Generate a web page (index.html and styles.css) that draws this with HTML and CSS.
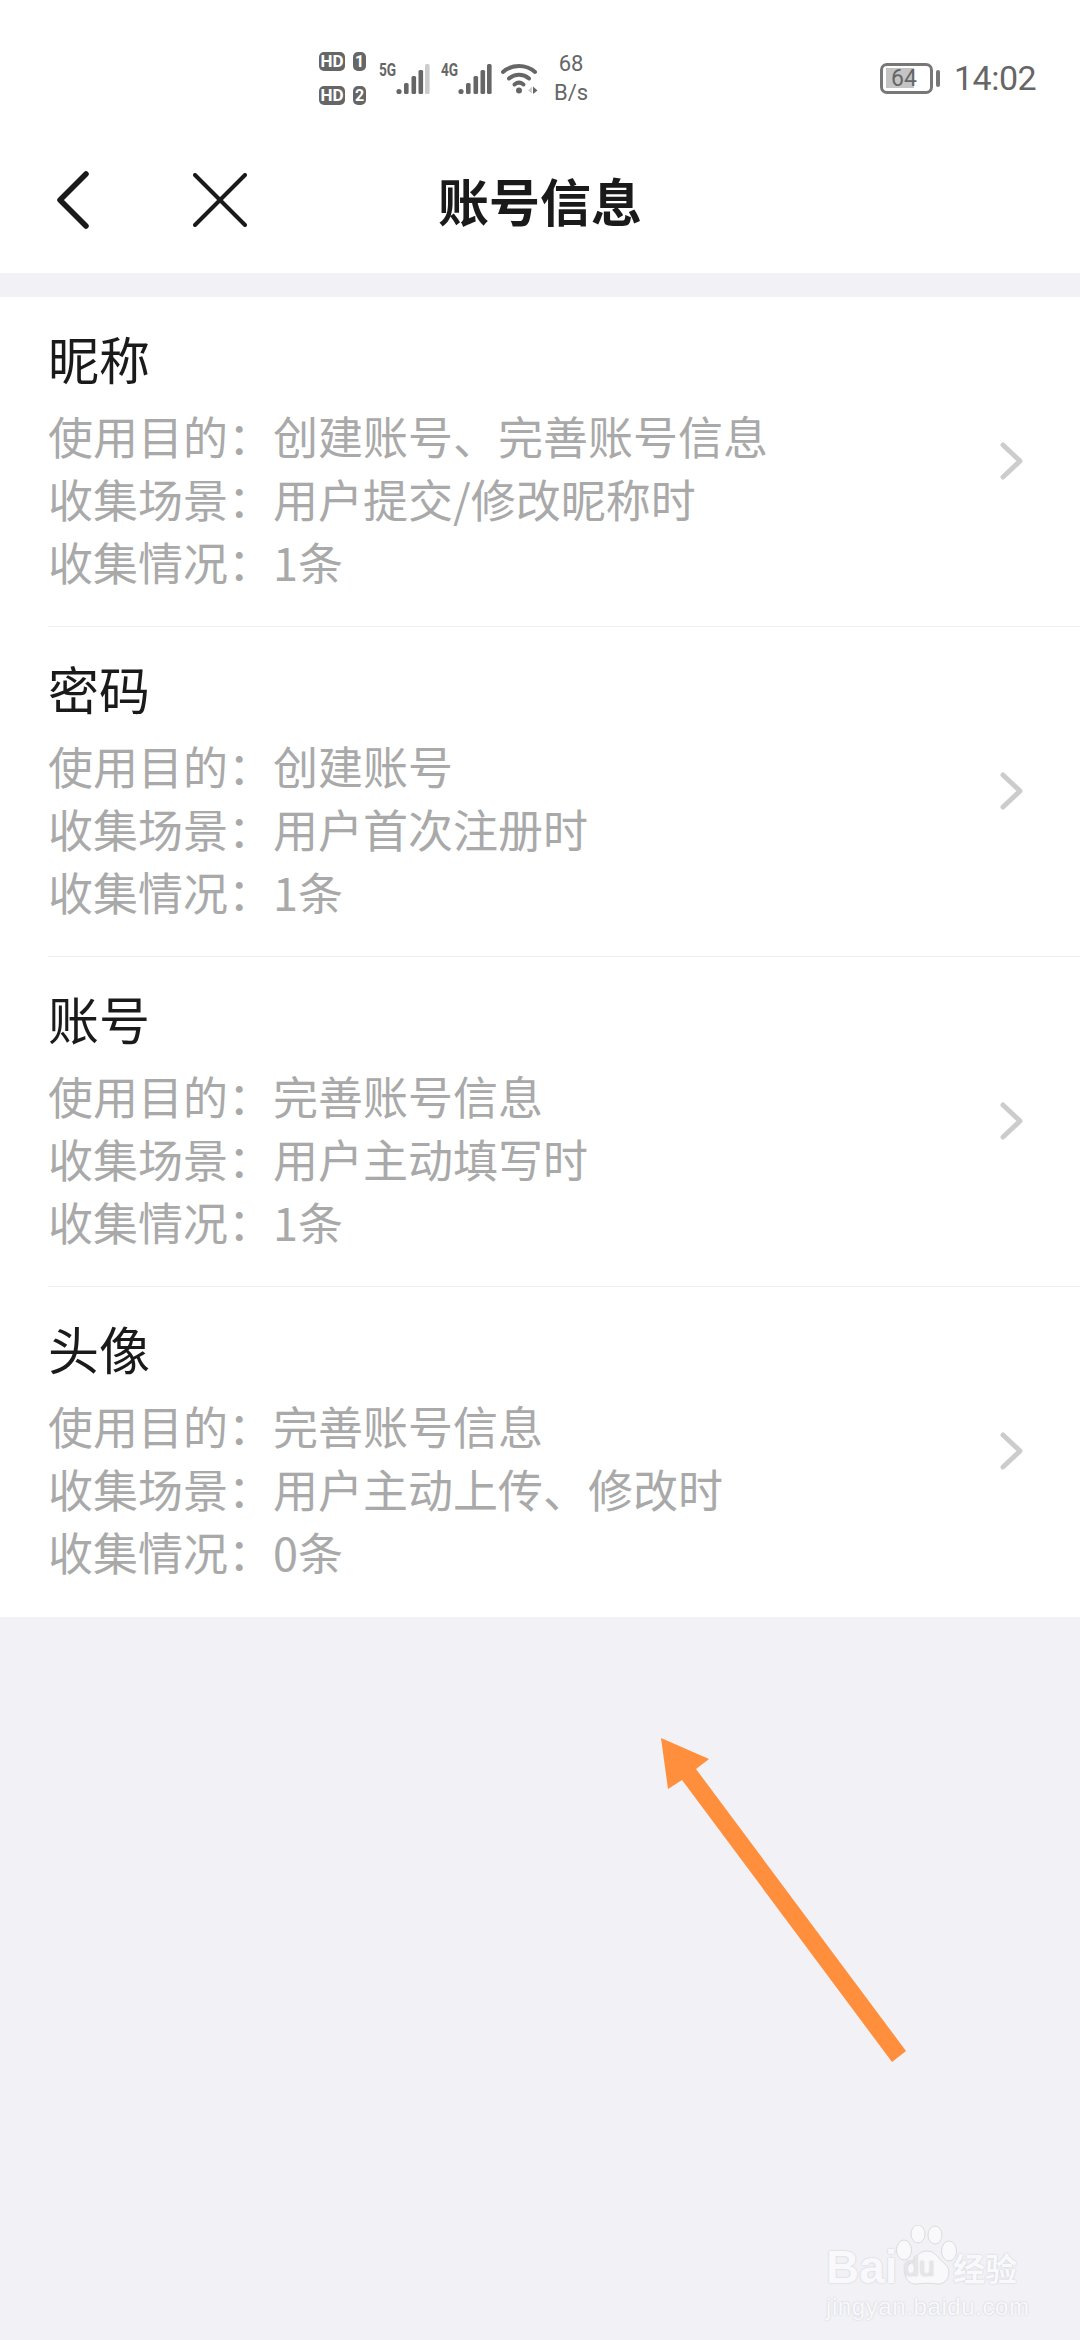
FILE: index.html
```html
<!DOCTYPE html>
<html lang="zh-CN">
<head>
    <meta charset="UTF-8">
    <title>账号信息</title>
    <link rel="stylesheet" href="styles.css">
</head>
<body>
    <div class="status">
        <div class="sims">
            <div class="sim"><span class="hd">HD</span><span class="num">1</span></div>
            <div class="sim"><span class="hd">HD</span><span class="num">2</span></div>
        </div>
        <div class="net net-first">
            <span class="gen">5G</span>
            <svg width="34" height="31" viewBox="0 0 34 31">
                <circle cx="3" cy="27.5" r="2.6" fill="#666"/>
                <rect x="8" y="19" width="4.6" height="11" rx="1.5" fill="#666"/>
                <rect x="15.5" y="12" width="4.6" height="18" rx="1.5" fill="#666"/>
                <rect x="22.5" y="6" width="4.6" height="24" rx="1.5" fill="#666"/>
                <rect x="29" y="0" width="4.6" height="30" rx="1.5" fill="#ccc"/>
            </svg>
        </div>
        <div class="net">
            <span class="gen">4G</span>
            <svg width="34" height="31" viewBox="0 0 34 31">
                <circle cx="3" cy="27.5" r="2.6" fill="#666"/>
                <rect x="8" y="19" width="4.6" height="11" rx="1.5" fill="#666"/>
                <rect x="15.5" y="12" width="4.6" height="18" rx="1.5" fill="#666"/>
                <rect x="22.5" y="6" width="4.6" height="24" rx="1.5" fill="#666"/>
                <rect x="29" y="0" width="4.6" height="30" rx="1.5" fill="#666"/>
            </svg>
        </div>
        <svg class="wifi" width="38" height="32" viewBox="0 0 38 32">
            <path d="M2 10C11 2 25 2 34 10" fill="none" stroke="#666" stroke-width="4" stroke-linecap="round"/>
            <path d="M8 16.500C14 11.500 22 11.500 28 16.500" fill="none" stroke="#666" stroke-width="4" stroke-linecap="round"/>
            <path d="M13.500 22.500C16.500 20 19.500 20 22.500 22.500" fill="none" stroke="#666" stroke-width="4" stroke-linecap="round"/>
            <circle cx="18" cy="28.500" r="3" fill="#666"/>
            <path d="M27 28.500l4-4v7z" fill="#ccc"/>
            <path d="M32 24.500l4.500 4-4.500 3.500z" fill="#666"/>
        </svg>
        <div class="speed"><span>68</span><span>B/s</span></div>
        <div class="battery">
            <div class="cell"><div class="fill"></div><span class="level">64</span></div>
            <div class="nub"></div>
        </div>
        <div class="clock">14:02</div>
    </div>

    <div class="nav">
        <div class="nav-btns">
            <svg width="36" height="58" viewBox="0 0 36 58">
                <path d="M31 3L5 29L31 55" fill="none" stroke="#1a1a1a" stroke-width="5.500" stroke-linecap="round" stroke-linejoin="round"/>
            </svg>
            <svg width="54" height="54" viewBox="0 0 54 54">
                <path d="M2 2L52 52M52 2L2 52" fill="none" stroke="#1a1a1a" stroke-width="4" stroke-linecap="round"/>
            </svg>
        </div>
        <h1 class="nav-title">账号信息</h1>
    </div>

    <div class="list">
        <div class="row">
            <div class="row-text">
                <div class="name">昵称</div>
                <div class="info">使用目的：创建账号、完善账号信息</div>
                <div class="info">收集场景：用户提交/修改昵称时</div>
                <div class="info">收集情况：1条</div>
            </div>
            <svg class="more" width="24" height="38" viewBox="0 0 24 38"><path d="M3 3L20 19L3 35" fill="none" stroke="#ccc" stroke-width="5" stroke-linecap="round" stroke-linejoin="round"/></svg>
        </div>
        <div class="row">
            <div class="row-text">
                <div class="name">密码</div>
                <div class="info">使用目的：创建账号</div>
                <div class="info">收集场景：用户首次注册时</div>
                <div class="info">收集情况：1条</div>
            </div>
            <svg class="more" width="24" height="38" viewBox="0 0 24 38"><path d="M3 3L20 19L3 35" fill="none" stroke="#ccc" stroke-width="5" stroke-linecap="round" stroke-linejoin="round"/></svg>
        </div>
        <div class="row">
            <div class="row-text">
                <div class="name">账号</div>
                <div class="info">使用目的：完善账号信息</div>
                <div class="info">收集场景：用户主动填写时</div>
                <div class="info">收集情况：1条</div>
            </div>
            <svg class="more" width="24" height="38" viewBox="0 0 24 38"><path d="M3 3L20 19L3 35" fill="none" stroke="#ccc" stroke-width="5" stroke-linecap="round" stroke-linejoin="round"/></svg>
        </div>
        <div class="row">
            <div class="row-text">
                <div class="name">头像</div>
                <div class="info">使用目的：完善账号信息</div>
                <div class="info">收集场景：用户主动上传、修改时</div>
                <div class="info">收集情况：0条</div>
            </div>
            <svg class="more" width="24" height="38" viewBox="0 0 24 38"><path d="M3 3L20 19L3 35" fill="none" stroke="#ccc" stroke-width="5" stroke-linecap="round" stroke-linejoin="round"/></svg>
        </div>
    </div>

    <svg class="arrow" width="260" height="345" viewBox="0 0 260 345">
        <path d="M1 18L49 39L36 49L246 331L232 342L22 60L8 69Z" fill="#ff8f3c"/>
    </svg>

    <div class="mark">
        <svg class="paw" width="64" height="66" viewBox="0 0 64 66">
            <g fill="#f9f9fb" stroke="#dcdce0" stroke-width="1">
                <ellipse cx="9" cy="25" rx="7.500" ry="10"/>
                <ellipse cx="23" cy="9" rx="7" ry="9"/>
                <ellipse cx="40" cy="10" rx="7" ry="9"/>
                <ellipse cx="54" cy="26" rx="7.500" ry="10"/>
                <path d="M32 26C41 26 43 34 50 39C58 46 53 60 42 59C36 58 28 58 22 59C11 60 6 47 14 39C21 34 23 26 32 26Z"/>
            </g>
        </svg>
        <div class="mark-logo"><span class="bai">Bai</span><span class="du">du</span><span class="jy">经验</span></div>
        <div class="mark-url">jingyan.baidu.com</div>
    </div>
</body>
</html>
```
FILE: styles.css
```css
* {
    margin: 0;
    padding: 0;
    box-sizing: border-box;
}
html, body {
    width: 1080px;
    height: 2340px;
    overflow: hidden;
}
body {
    position: relative;
    background: #f1f1f6;
    font-family: "Noto Sans CJK SC", "Noto Sans", sans-serif;
}

/* status bar */
.status {
    height: 127px;
    padding: 29px 0 0 319px;
    background: #fff;
    display: flex;
    align-items: center;
    color: #666;
    font-family: Roboto, sans-serif;
}
.sims {
    display: flex;
    flex-direction: column;
    gap: 15px;
}
.sim {
    display: flex;
    gap: 8px;
}
.hd, .num {
    height: 19px;
    background: #666;
    color: #fff;
    border-radius: 5px;
    font-size: 17px;
    font-weight: 700;
    line-height: 19px;
    text-align: center;
}
.hd {
    width: 26px;
}
.num {
    width: 13px;
    font-size: 16px;
}
.net {
    display: flex;
    align-items: flex-start;
    margin-left: 11px;
}
.net-first {
    margin-left: 13px;
}
.net svg {
    margin-top: 2px;
}
.gen {
    width: 17px;
    font-size: 19px;
    font-weight: 700;
    line-height: 16px;
    transform: scaleX(.72);
    transform-origin: left;
}
.wifi {
    margin-left: 9px;
}
.speed {
    width: 36px;
    margin-left: 14px;
    display: flex;
    flex-direction: column;
    align-items: center;
    gap: 5px;
    font-size: 22px;
    line-height: 24px;
}
.battery {
    margin-left: 291px;
    display: flex;
    align-items: center;
    gap: 3px;
}
.cell {
    position: relative;
    width: 53px;
    height: 31px;
    border: 3px solid #777;
    border-radius: 7px;
}
.fill {
    width: 28px;
    height: 20px;
    margin: 2px 0 0 3px;
    background: #c4c4c4;
}
.level {
    position: absolute;
    left: 8px;
    top: 0;
    font-size: 23px;
    line-height: 25px;
}
.nub {
    width: 4px;
    height: 17px;
    background: #777;
    border-radius: 2px;
}
.clock {
    margin-left: 14px;
    font-size: 34px;
    letter-spacing: -.5px;
    line-height: 40px;
}

/* title bar */
.nav {
    height: 146px;
    padding: 0 55px;
    background: #fff;
    display: grid;
    grid-template-columns: 1fr auto 1fr;
    align-items: center;
}
.nav-btns {
    display: flex;
    align-items: center;
    gap: 102px;
}
.nav-title {
    font-size: 51px;
    font-weight: 700;
    color: #1a1a1a;
    line-height: 60px;
}

/* list */
.list {
    margin-top: 24px;
    padding-left: 48px;
    background: #fff;
}
.row {
    height: 330px;
    padding-top: 30px;
    padding-right: 56px;
    border-bottom: 1px solid #eee;
    display: flex;
    justify-content: space-between;
}
.row:last-child {
    border-bottom: 0;
}
.name {
    margin-bottom: 14px;
    font-size: 51px;
    line-height: 63px;
    color: #1a1a1a;
}
.info {
    font-size: 45px;
    line-height: 63px;
    color: #a9a9a9;
}
.more {
    margin-top: 115px;
}

/* annotation on top of the screenshot */
.arrow {
    position: absolute;
    left: 660px;
    top: 1720px;
}
.mark {
    position: absolute;
    left: 826px;
    top: 2225px;
    width: 200px;
}
.paw {
    position: absolute;
    left: 69px;
    top: 0;
}
.mark-logo {
    position: relative;
    margin-top: 20px;
    display: flex;
    align-items: center;
    height: 44px;
    color: #f9f9fb;
    text-shadow: 0 0 2px #c6c6cc;
    font-family: "Liberation Sans", sans-serif;
    font-weight: 700;
    white-space: nowrap;
}
.bai {
    width: 68px;
    font-size: 46px;
}
.du {
    width: 50px;
    color: #e6e6ea;
    font-size: 28px;
    font-weight: 400;
    text-align: center;
}
.jy {
    width: 66px;
    margin-left: 9px;
    font-family: "Noto Sans CJK SC", sans-serif;
    font-size: 32px;
}
.mark-url {
    position: relative;
    margin-top: 4px;
    color: #f9f9fb;
    text-shadow: 0 0 2px #c6c6cc;
    font-family: "Liberation Sans", sans-serif;
    font-size: 24px;
    line-height: 28px;
    letter-spacing: .6px;
    white-space: nowrap;
}
```
